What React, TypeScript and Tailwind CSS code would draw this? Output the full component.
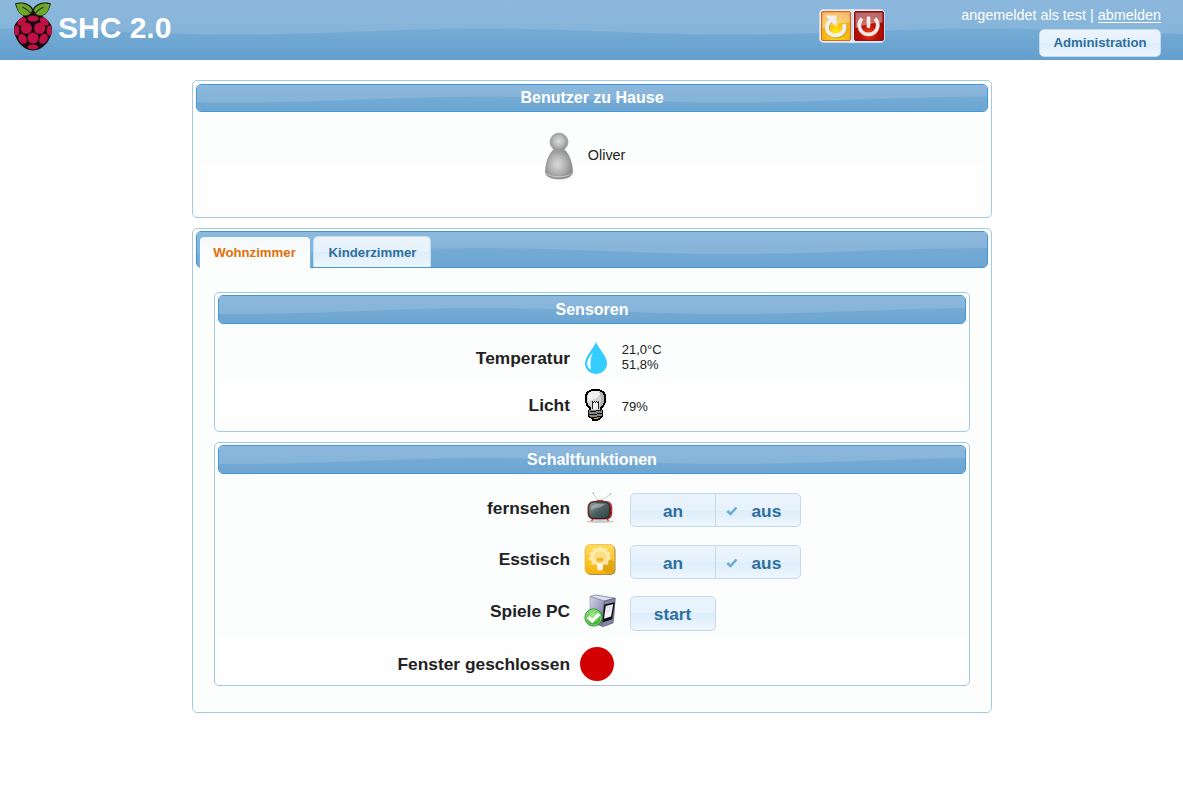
import React from "react";

type WaveProps = { id: string; height: number; width: number };

function wavePath(width: number, height: number) {
  const mid = height / 2 + 1.5;
  const start = width / 2 - 107 - 1000;
  let d = `M${start} ${mid - 3}`;
  for (let i = 0; i < 8; i++) {
    const x = start + i * 250;
    const from = i % 2 === 0 ? mid - 3 : mid + 3;
    const to = i % 2 === 0 ? mid + 3 : mid - 3;
    d += ` C${x + 91} ${from} ${x + 159} ${to} ${x + 250} ${to}`;
  }
  return `${d} V${height} H${start} Z`;
}

function Wave({ id, width, height }: WaveProps) {
  return (
    <svg className="absolute inset-0" width={width} height={height} viewBox={`0 0 ${width} ${height}`} aria-hidden="true">
      <defs>
        <linearGradient id={`${id}-top`} x1="0" y1="0" x2="0" y2="1">
          <stop offset="0" stopColor="#8bb8dc" />
          <stop offset="1" stopColor="#83b1d7" />
        </linearGradient>
        <linearGradient id={`${id}-low`} gradientUnits="userSpaceOnUse" x1="0" y1={height / 2} x2="0" y2={height}>
          <stop offset="0" stopColor="#74abd5" />
          <stop offset="1" stopColor={height > 50 ? "#659fce" : "#6ca5d1"} />
        </linearGradient>
      </defs>
      <rect width={width} height={height} fill={`url(#${id}-top)`} />
      <path d={wavePath(width, height)} fill={`url(#${id}-low)`} />
    </svg>
  );
}

const glass = "border border-[#c5dbec] bg-[linear-gradient(#ebf4fd_0%,#e6f2fc_50%,#dcedfb_50%,#eef6fd_100%)] font-bold text-[#2e6e9e]";

function Raspberry() {
  return (
    <svg width="42" height="50" viewBox="0 0 42 50" aria-hidden="true">
      <path d="M21 12.500c-5 0-9 1.500-12.500 5C4.500 21 2 23.500 2 28c-.3 4.500 1.500 7.500 3.500 11.500C9 45.500 15 49.500 21 49.500s12-4 15.500-10C38.500 35.500 40.300 32.500 40 28c0-4.500-2.500-7-6.500-10.500C30 14 26 12.500 21 12.500Z" fill="#170b0d" />
      <path d="M3 2.500C8 .5 18 1.500 21 8 24 1.500 34 .5 39 2.500c-1.500 5-3.500 12-10.500 13H13.500C6.500 14.500 4.500 7.500 3 2.500Z" fill="#14200c" />
      <path d="M4 3.200c5-1.900 14-.4 16 6.300l-1.500 3.500C14 15.500 9 14.500 7 11 5.500 8.500 5 6 4 3.200ZM38 3.200c-5-1.900-14-.4-16 6.300l1.500 3.500c4.500 2.500 9.500 1.500 11.500-2C36.500 8.500 37 6 38 3.200Z" fill="#6fa52c" />
      <path d="M10.500 6q4.500 2 8.500 6.500M31.500 6Q27 8 23 12.500" fill="none" stroke="#1f3410" strokeWidth="1.100" />
      <path d="m17 14 4-4 4 4-4 1.500Z" fill="#170b0d" />
      <g fill="#bc1142">
        <ellipse cx="21" cy="17.600" rx="5.700" ry="3" />
        <ellipse cx="9.800" cy="20.500" rx="5" ry="3.400" transform="rotate(-40 9.800 20.500)" />
        <ellipse cx="32.200" cy="20.500" rx="5" ry="3.400" transform="rotate(40 32.200 20.500)" />
        <circle cx="14.300" cy="27.200" r="5.600" />
        <circle cx="27.700" cy="27.200" r="5.600" />
        <ellipse cx="4.700" cy="29.500" rx="2.500" ry="5" />
        <ellipse cx="37.300" cy="29.500" rx="2.500" ry="5" />
        <circle cx="21" cy="37" r="5.500" />
        <ellipse cx="10.500" cy="37.800" rx="4" ry="5.300" transform="rotate(-30 10.500 37.800)" />
        <ellipse cx="31.500" cy="37.800" rx="4" ry="5.300" transform="rotate(30 31.500 37.800)" />
        <ellipse cx="21" cy="46" rx="5.500" ry="2.500" />
      </g>
    </svg>
  );
}

function RebootIcon() {
  return (
    <svg width="30" height="30" viewBox="0 0 30 30" aria-hidden="true">
      <defs>
        <radialGradient id="reboot-fill" cx=".5" cy=".75" r=".8">
          <stop offset="0" stopColor="#fff000" />
          <stop offset=".45" stopColor="#f5bd13" />
          <stop offset="1" stopColor="#ed8e20" />
        </radialGradient>
      </defs>
      <rect x=".5" y=".5" width="29" height="29" rx="1.5" fill="url(#reboot-fill)" stroke="#ea6418" />
      <path d="M1.500 1.500h27v10Q14 12 1.500 17Z" fill="#fff" opacity=".38" />
      <path d="M9.200 10C5 13.500 4.800 19 8.500 22.500c4 3.700 10.500 3 13.600-1.200 1.400-2.200 1.700-4.900 1-7.800" fill="none" stroke="#9c7530" strokeWidth="4.600" opacity=".4" transform="translate(.6 .6)" />
      <path d="M10.500 8.500C5 13 4.800 18.600 8.300 22c4 3.700 10.600 3 13.800-1.200 1.500-2.200 1.800-4.900 1-7.800" fill="none" stroke="#f1efed" strokeWidth="3.900" />
      <path d="M4 4.500h11.500V16l-3.400-3.400-3.800-3.800Z" fill="#f1efed" />
    </svg>
  );
}

function PowerIcon() {
  return (
    <svg width="30" height="30" viewBox="0 0 30 30" aria-hidden="true">
      <defs>
        <radialGradient id="power-fill" cx=".5" cy=".75" r=".75">
          <stop offset="0" stopColor="#f34110" />
          <stop offset=".4" stopColor="#b91306" />
          <stop offset="1" stopColor="#820505" />
        </radialGradient>
      </defs>
      <rect x=".5" y=".5" width="29" height="29" rx="1.5" fill="url(#power-fill)" stroke="#a20a0a" />
      <path d="M1.500 1.500h27v10Q14 12 1.500 17Z" fill="#fff" opacity=".4" />
      <path d="M8 7.500a9.300 9.300 0 1 0 13 0" fill="none" stroke="#efe9e8" strokeWidth="3.700" />
      <path d="M14.500 7v8.500" stroke="#efe9e8" strokeWidth="3.600" strokeLinecap="round" />
    </svg>
  );
}

function PersonIcon() {
  return (
    <svg width="30" height="48" viewBox="0 0 30 48" aria-hidden="true">
      <defs>
        <radialGradient id="person-head" cx=".48" cy=".45" r=".6">
          <stop offset="0" stopColor="#dedede" />
          <stop offset=".5" stopColor="#b8b8b8" />
          <stop offset="1" stopColor="#828282" />
        </radialGradient>
        <radialGradient id="person-body" cx=".45" cy=".5" r=".58">
          <stop offset="0" stopColor="#dadada" />
          <stop offset=".5" stopColor="#b4b4b4" />
          <stop offset="1" stopColor="#858585" />
        </radialGradient>
      </defs>
      <path d="M10 17.500q5 3 10 0c5 4 8.500 14 8.500 22.500 0 4.500-6 7-13.500 7s-13.500-2.500-13.500-7C1.500 31.500 5 21.500 10 17.500Z" fill="url(#person-body)" stroke="#929292" strokeWidth=".8" />
      <path d="M2.300 41c2.500 5 22.900 5 25.400 0" fill="none" stroke="#d2d2d2" strokeWidth=".8" />
      <ellipse cx="15" cy="10" rx="9" ry="9" fill="url(#person-head)" stroke="#a0a0a0" strokeWidth=".7" />
    </svg>
  );
}

function DropIcon() {
  return (
    <svg width="32" height="32" viewBox="0 0 32 32" aria-hidden="true">
      <path d="M12 0C10 6 1 14 1 21.5a11 10.5 0 0 0 22 0C23 14 14 6 12 0Z" fill="#35ccff" />
      <path d="M8.800 10.500C5 15 3.200 18.500 3.200 21.600c0 3 1.600 5 4 6.200C5.800 23 6.500 16 8.800 10.500Z" fill="#fff" />
    </svg>
  );
}

function BulbIcon() {
  return (
    <svg width="32" height="32" viewBox="0 0 32 32" aria-hidden="true" shapeRendering="crispEdges">
      <path d="M8 1h7l4 2 2 3v7l-2 4-2 2v3h1v5l-3 3h-2v1H9v-1l-4-3v-5h1v-3l-3-3-1-4V6l2-3Z" fill="#d4d4d4" stroke="#000" strokeWidth="2" />
      <path d="M4 5l4-3h6l3 3-6 5-7 2Z" fill="#eee" />
      <path d="M15 3h3l2 4v6l-3 5h-2c2-5 3-9 0-15Z" fill="#b4b4b4" />
      <path d="M5 5h3v4H4Z" fill="#fff" />
      <path d="M9 13h5v7H9Z" fill="#eee" />
      <path d="M8 12h1v8H8ZM14 12h1v8h-1ZM9 13h1v1H9ZM10 12h1v1h-1ZM11 13h1v1h-1ZM12 12h1v1h-1ZM13 13h1v1h-1Z" fill="#222" />
      <path d="M5 21h13v6l-3 2H9l-4-2Z" fill="#858585" />
      <path d="M6 22h6l5-1M5 25h8l5-1M7 28h6l4-1" fill="none" stroke="#111" strokeWidth="1" />
      <path d="M10 29h4v1h-4Z" fill="#edae1d" />
    </svg>
  );
}

function TvIcon() {
  return (
    <svg width="32" height="32" viewBox="0 0 32 32" aria-hidden="true">
      <defs>
        <linearGradient id="tv-glass" x1="0" y1="0" x2="1" y2="1">
          <stop offset="0" stopColor="#9aa5a5" />
          <stop offset=".5" stopColor="#4e6064" />
          <stop offset="1" stopColor="#2c4046" />
        </linearGradient>
        <linearGradient id="tv-case" x1="0" y1="0" x2="0" y2="1">
          <stop offset="0" stopColor="#84413b" />
          <stop offset=".5" stopColor="#d73a30" />
          <stop offset="1" stopColor="#8c211b" />
        </linearGradient>
      </defs>
      <ellipse cx="16" cy="29.500" rx="14" ry="1.500" fill="#999" opacity=".5" />
      <path d="M14 9 9.500 1.500M17 9l9.500-7" stroke="#b5b5b5" strokeWidth=".7" />
      <circle cx="9.300" cy="1.300" r=".8" fill="#999" /><circle cx="26.600" cy="2" r=".7" fill="#999" />
      <path d="M12 9.500q4-2.500 8 0M8.500 27l-.8 2M23.500 27l.8 2" stroke="#b8211b" strokeWidth="1.200" fill="none" />
      <rect x="3.500" y="9" width="24.800" height="18.500" rx="6" fill="url(#tv-case)" />
      <rect x="4.800" y="10.100" width="20.800" height="16.300" rx="5" fill="url(#tv-glass)" stroke="#151a1b" strokeWidth=".8" />
      <path d="M7 18c0-6 4-6 14-6-3 4-8 3-14 6Z" fill="#fff" opacity=".3" />
      <path d="M26.700 15v7" stroke="#3b1311" strokeWidth=".8" />
    </svg>
  );
}

function LightIcon() {
  return (
    <svg width="32" height="32" viewBox="0 0 32 32" className="translate-y-px" aria-hidden="true">
      <defs>
        <linearGradient id="light-fill" x1="0" y1="0" x2="0" y2="1">
          <stop offset="0" stopColor="#ffda5c" />
          <stop offset="1" stopColor="#f5b40a" />
        </linearGradient>
      </defs>
      <rect x="1.800" y="1.200" width="29.700" height="29.700" rx="5" fill="#948055" />
      <rect x="1" y=".5" width="29.500" height="29.500" rx="5" fill="url(#light-fill)" stroke="#e0ac2b" strokeWidth=".6" />
      <path d="m23 11 7 7v7q0 4-4 4h-4l-6-6Z" fill="#d79a08" opacity=".65" />
      <path d="m16 2 2.600 2.800 3.800-1 .5 3.700 3.700 1-1.300 3.500 2 3.200-3.100 1.800.1 3.700-3.800-.2-4.500 1-4.800-1-3.600.2.100-3.700-3.100-1.800 2-3.200L5.300 8.500 9 7.500l.5-3.700 3.800 1Z" fill="#fff0c0" opacity=".85" />
      <path d="M10 13a6 6 0 1 1 12 0c0 3-3 4-3.300 7h-5.400C13 17 10 16 10 13Z" fill="#ffdd82" />
      <path d="m12.800 14 1.200 3 1-2.500L16 17l1-2.500 1 2.500 1.200-3" fill="none" stroke="#eaaf20" strokeWidth="1.200" />
      <path d="M13 19.800h6v4.400l-1.500 2h-3L13 24Z" fill="#fff" /><path d="M13 22.300h6m-5.700 1.800h5.400" stroke="#e8d59f" strokeWidth=".6" />
    </svg>
  );
}

function ComputerIcon() {
  return (
    <svg width="34" height="34" viewBox="0 0 34 34" className="shrink-0" aria-hidden="true">
      <defs>
        <linearGradient id="case-side" x1="0" y1="0" x2="1" y2="1">
          <stop offset="0" stopColor="#d6d7eb" />
          <stop offset="1" stopColor="#696b91" />
        </linearGradient>
        <radialGradient id="check-fill" cx=".45" cy=".35" r=".65">
          <stop offset="0" stopColor="#a9ec98" />
          <stop offset=".6" stopColor="#5bc849" />
          <stop offset="1" stopColor="#299a25" />
        </radialGradient>
      </defs>
      <path d="M7 2.500 13 1l19 3.200-10.500 3Z" fill="#dedfec" stroke="#777b99" strokeWidth=".8" />
      <path d="M7 2.700 21.500 7 19 32.500 7 28Z" fill="url(#case-side)" stroke="#7d7f9e" strokeWidth=".5" />
      <path d="M21.500 7 32.300 4.200C31.300 12 31.500 20 30 29l-9.500 3.500q-2 0-2-2Z" fill="#8184a5" stroke="#515469" strokeWidth=".7" />
      <path d="m21.300 10.500 10.500-2.300-2.600 17-9.800 3.300Z" fill="#101116" />
      <path d="m22.800 12 7.400-1.700L28 22.500l-7 2.300Z" fill="#f3f3f8" />
      <path d="m23.400 14 5.500-1.300m-5.700 3.300 5.400-1.500m-5.600 3.400 5.300-1.500" stroke="#c2c4cf" strokeWidth=".5" />
      <circle cx="10.500" cy="23.500" r="8.600" fill="url(#check-fill)" stroke="#218e23" strokeWidth=".9" />
      <circle cx="10.500" cy="23.500" r="7.600" fill="none" stroke="#a8e89d" strokeWidth=".7" />
      <path d="m5.200 23 4 4 7-7" fill="none" stroke="#fff" strokeWidth="3.300" />
    </svg>
  );
}

function PanelTitle({ id, title, width, height }: WaveProps & { title: string }) {
  return (
    <h2 className={`relative overflow-hidden rounded-[5px] border border-[#4297d7] text-center text-[16px] font-bold text-white ${height === 28 ? "h-[28px] leading-[26px]" : "h-[29px] leading-[27px]"}`}>
      <Wave id={id} width={width - 2} height={height - 2} />
      <span className="relative pl-px">{title}</span>
    </h2>
  );
}

type RowProps = { label: string; icon: React.ReactNode; children?: React.ReactNode; className: string };

function Row({ label, icon, children, className }: RowProps) {
  return (
    <div className={`flex items-center ${className}`}>
      <div className="w-[352.5px] text-right text-[17.35px] font-bold leading-5">{label}</div>
      <div className="ml-[13.5px] flex w-8 shrink-0 justify-center">{icon}</div>
      {children}
    </div>
  );
}

function OnOff({ className }: { className: string }) {
  return (
    <div className={`ml-3.5 flex text-[17.28px] ${className}`}>
      <button className={`h-[34px] w-[86px] rounded-l-[5px] pt-1 pl-px ${glass}`}>an</button>
      <button className={`-ml-px flex h-[34px] w-[86px] items-center rounded-r-[5px] pt-1 pl-2.5 ${glass}`}>
        <svg width="12" height="10" viewBox="0 0 12 10" className="-mt-0.5 mr-3.5" aria-hidden="true">
          <path d="m1.300 5 3.200 3L10.500 1.500" fill="none" stroke="#6da8d5" strokeWidth="2.400" />
        </svg>
        aus
      </button>
    </div>
  );
}

const panel = "rounded-[5px] border border-[#a6c9e2]";

export default function App() {
  return (
    <div className="min-h-[794px] bg-white font-['Liberation_Sans',Arial,sans-serif] text-[#222222]">
      <header className="relative h-[60px] overflow-hidden text-white">
        <Wave id="masthead" width={1183} height={60} />
        <div className="relative flex h-full">
          <div className="flex w-[819px] pt-px pl-3">
            <Raspberry />
            <h1 className="ml-1 pt-[7px] text-[30px] leading-10 font-bold">SHC 2.0</h1>
          </div>
          <div className="mt-[9px] flex h-[34px] rounded-[5px] bg-[#e1effb]">
            <button className="flex h-[34px] w-[33px] items-center justify-center rounded-[5px] border border-[#c5dbec]"><RebootIcon /></button>
            <button className="flex h-[34px] w-[33px] items-center justify-center rounded-[5px] border border-[#c5dbec]"><PowerIcon /></button>
          </div>
          <div className="ml-auto flex flex-col items-end pt-1.5 pr-[22px]">
            <div className="h-[23px] text-[14.4px] leading-[18px]">angemeldet als test | <a className="inline-block h-[17px] border-b border-white">abmelden</a></div>
            <button className={`h-7 w-[122px] rounded-[5px] text-[13.2px] ${glass}`}>Administration</button>
          </div>
        </div>
      </header>

      <main className="mx-auto mt-5 w-[800px]">
        <section className={`${panel} h-[138px] bg-[linear-gradient(#fcfdfd_62%,#fefefe_62%)] p-[3px]`}>
          <PanelTitle id="home" title="Benutzer zu Hause" width={792} height={28} />
          <div className="flex pt-5 pl-[348px]">
            <PersonIcon />
            <span className="ml-3.5 pt-3.5 pl-[0.3px] text-[14.4px] leading-[18px]">Oliver</span>
          </div>
        </section>

        <section className={`${panel} mt-2.5 h-[485px] bg-[#fcfdfd] px-[3px] pt-0.5`}>
          <nav className="relative h-[37px] rounded-[5px] border border-[#4297d7]">
            <div className="absolute inset-0 overflow-hidden rounded-[4px]"><Wave id="tabs" width={790} height={35} /></div>
            <div className="relative flex items-start gap-[2px] pt-1 pl-[2px] text-[13.2px] font-bold">
              <button className="h-8 w-[112px] rounded-t-[5px] border border-b-0 border-[#79b7e7] bg-[linear-gradient(#f5f8f9,#fcfdfd_60%)] text-[#e17009]">Wohnzimmer</button>
              <button className={`h-[31px] w-[118px] rounded-t-[5px] border-b-0 pt-0.5 pl-0.5 ${glass}`}>Kinderzimmer</button>
            </div>
          </nav>

          <div className="px-[18px] pt-6">
            <section className={`${panel} h-[140px] bg-[linear-gradient(#fcfdfd_62%,#fefefe_62%)] px-[3px] pt-0.5`}>
              <PanelTitle id="sensors" title="Sensoren" width={748} height={29} />
              <div className="pt-2.5 text-[13px] leading-[15px]">
                <Row className="h-12" label="Temperatur" icon={<DropIcon />}>
                  <div className="-mt-0.5 ml-1.5 pl-[0.3px]">21,0°C<br />51,8%</div>
                </Row>
                <Row className="h-[46px]" label="Licht" icon={<BulbIcon />}>
                  <div className="ml-1.5 pt-0.5 pl-[0.3px]">79%</div>
                </Row>
              </div>
            </section>

            <section className={`${panel} mt-2.5 h-[244px] bg-[linear-gradient(#fcfdfd_80%,#fefefe_80%)] px-[3px] pt-0.5`}>
              <PanelTitle id="switches" title="Schaltfunktionen" width={748} height={29} />
              <div className="pt-2">
                <Row className="h-[51px]" label="fernsehen" icon={<TvIcon />}><OnOff className="mt-1" /></Row>
                <Row className="h-[52px]" label="Esstisch" icon={<LightIcon />}><OnOff className="mt-1.5" /></Row>
                <Row className="h-[52px]" label="Spiele PC" icon={<ComputerIcon />}>
                  <button className={`mt-1 ml-3.5 h-[35px] w-[86px] rounded-[5px] pt-[3px] text-[17.28px] ${glass}`}>start</button>
                </Row>
                <Row
                  className="h-[54px]"
                  label="Fenster geschlossen"
                  icon={<div className="mr-1.5 size-[34px] shrink-0 rounded-full bg-[#d20000]" />}
                />
              </div>
            </section>
          </div>
        </section>
      </main>
    </div>
  );
}
